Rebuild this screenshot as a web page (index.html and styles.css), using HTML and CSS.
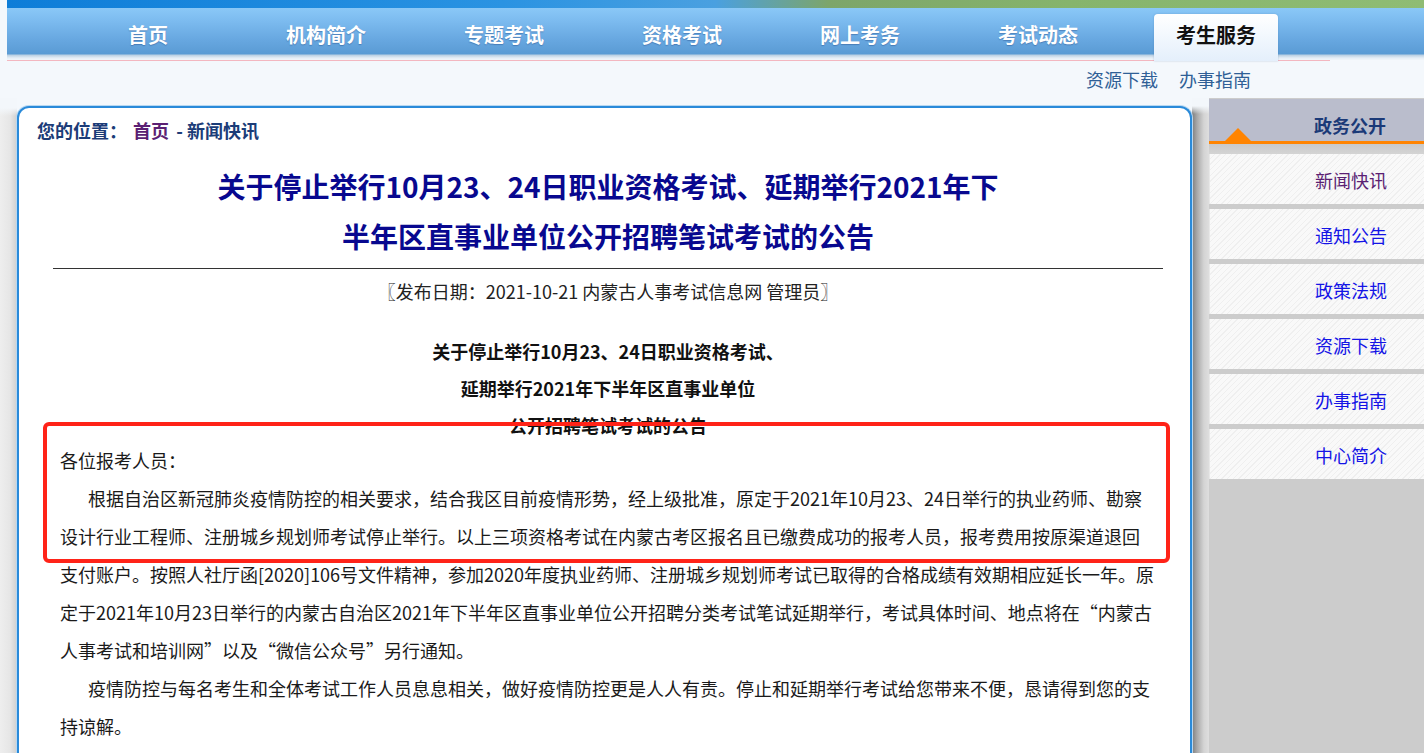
FILE: index.html
```html
<!DOCTYPE html>
<html lang="zh-CN">
<head>
<meta charset="utf-8">
<title>内蒙古人事考试信息网 - 新闻快讯</title>
<link rel="stylesheet" href="styles.css">
</head>
<body>
<div class="page">
  <header class="top">
    <div class="band"></div>
    <nav class="nav">
      <ul class="nav-list">
        <li class="nav-item"><a class="nav-link" href="#">首页</a></li>
        <li class="nav-item"><a class="nav-link" href="#">机构简介</a></li>
        <li class="nav-item"><a class="nav-link" href="#">专题考试</a></li>
        <li class="nav-item"><a class="nav-link" href="#">资格考试</a></li>
        <li class="nav-item"><a class="nav-link" href="#">网上考务</a></li>
        <li class="nav-item"><a class="nav-link" href="#">考试动态</a></li>
        <li class="nav-item"><a class="nav-link nav-active" href="#">考生服务</a></li>
      </ul>
    </nav>
    <div class="pinkline"></div>
    <div class="subbar">
      <a class="sub-link" href="#">资源下载</a>
      <a class="sub-link" href="#">办事指南</a>
    </div>
  </header>

  <div class="main">
    <div class="gutter"></div>
    <section class="box">
      <div class="crumb">
        <span class="crumb-label">您的位置：</span>
        <a class="crumb-home" href="#">首页</a>
        <span class="crumb-cur">- 新闻快讯</span>
      </div>
      <div class="content">
        <h1 class="title">关于停止举行10月23、24日职业资格考试、延期举行2021年下半年区直事业单位公开招聘笔试考试的公告</h1>
        <hr class="rule">
        <p class="meta">〖发布日期：2021-10-21 内蒙古人事考试信息网 管理员〗</p>
        <p class="subtitle">关于停止举行10月23、24日职业资格考试、<br>延期举行2021年下半年区直事业单位<br>公开招聘笔试考试的公告</p>
        <p class="greet">各位报考人员：</p>
        <p class="para">根据自治区新冠肺炎疫情防控的相关要求，结合我区目前疫情形势，经上级批准，原定于2021年10月23、24日举行的执业药师、勘察设计行业工程师、注册城乡规划师考试停止举行。以上三项资格考试在内蒙古考区报名且已缴费成功的报考人员，报考费用按原渠道退回支付账户。按照人社厅函[2020]106号文件精神，参加2020年度执业药师、注册城乡规划师考试已取得的合格成绩有效期相应延长一年。原定于2021年10月23日举行的内蒙古自治区2021年下半年区直事业单位公开招聘分类考试笔试延期举行，考试具体时间、地点将在“内蒙古人事考试和培训网”以及“微信公众号”另行通知。</p>
        <p class="para">疫情防控与每名考生和全体考试工作人员息息相关，做好疫情防控更是人人有责。停止和延期举行考试给您带来不便，恳请得到您的支持谅解。</p>
      </div>
      <div class="mark"></div>
    </section>
    <div class="shade"></div>
    <aside class="side">
      <div class="side-head">
        <span class="side-tri"></span>
        <span class="side-title">政务公开</span>
      </div>
      <div class="side-gap"></div>
      <a class="side-item side-visited" href="#">新闻快讯</a>
      <a class="side-item" href="#">通知公告</a>
      <a class="side-item" href="#">政策法规</a>
      <a class="side-item" href="#">资源下载</a>
      <a class="side-item" href="#">办事指南</a>
      <a class="side-item" href="#">中心简介</a>
    </aside>
  </div>
</div>
</body>
</html>
```
FILE: styles.css
```css
* { box-sizing: border-box; }
html, body { margin: 0; padding: 0; }
body {
  font-family: "Noto Sans CJK SC", "Noto Sans", sans-serif;
  background: #f4f8fc;
  width: 1424px;
  height: 753px;
  overflow: hidden;
}
a { text-decoration: none; }

.top { margin-left: 7px; }
.band {
  height: 8px;
  background: linear-gradient(to right, #0d7dd8 0, #2a93e2 35%, #4aa0e0 50%, #7da56a 58%, #86b46c 75%, #8fbc74 100%);
}
.nav {
  height: 52px;
  background: linear-gradient(to bottom, #8ac8f7 0, #7dbcf0 12px, #67a7e0 32px, #5a9bd4 46px, #b9cfe2 47px, #e6eef6 50px, #f2f6fa 52px);
}
.nav-list {
  list-style: none;
  margin: 0;
  padding: 0 0 0 52px;
  display: flex;
  height: 52px;
}
.nav-item {
  width: 178px;
  display: flex;
  justify-content: center;
}
.nav-link {
  color: #fff;
  font-weight: bold;
  font-size: 20px;
  line-height: 54px;
  height: 54px;
  text-shadow: 0 1px 1px rgba(40, 80, 140, 0.45);
}
.nav-active {
  position: relative;
  z-index: 1;
  width: 124px;
  height: 47px;
  margin-top: 6px;
  line-height: 42px;
  text-align: center;
  color: #111;
  text-shadow: none;
  background: linear-gradient(to bottom, #ffffff 0, #f4f9fe 40%, #e4effb 100%);
  border-radius: 4px 4px 0 0;
  box-shadow: 0 0 2px rgba(60, 100, 150, 0.35);
}
.pinkline {
  width: 1323px;
  height: 1px;
  background: #f3b7c0;
}
.subbar {
  height: 37px;
  display: flex;
  justify-content: flex-end;
  align-items: center;
  gap: 21px;
  padding-right: 173px;
  padding-bottom: 2px;
}
.sub-link {
  color: #2f5f96;
  font-size: 18px;
  line-height: 24px;
}

.main {
  display: flex;
  align-items: stretch;
  height: 655px;
}
.gutter {
  width: 17px;
  flex: none;
  background: linear-gradient(to bottom, #f3f7fb 0, #f3f7fb 10px, transparent 18px),
              linear-gradient(to right, #eeeeee 0, #e6e6e6 60%, #cfcfcf 100%);
}
.box {
  position: relative;
  width: 1175px;
  flex: none;
  margin-top: 8px;
  background: #fff;
  border: 2px solid #2a8ad9;
  border-bottom: none;
  border-radius: 12px 12px 0 0;
  box-shadow: 0 0 0 1px #b7d8f2;
}
.crumb {
  padding: 10px 0 0 18px;
  font-size: 18px;
  font-weight: bold;
  line-height: 24px;
  color: #1b3c78;
}
.crumb-label { margin-right: 2px; }
.crumb-home { color: #5b1f73; }
.crumb-cur { margin-left: 3px; }

.content {
  padding: 0 27px 0 34px;
}
.title {
  width: 790px;
  margin: 19px auto 0;
  font-size: 28px;
  line-height: 50px;
  font-weight: bold;
  color: #08088f;
  text-align: center;
}
.rule {
  margin: 7px 0 0;
  border: none;
  height: 1px;
  background: #333;
}
.meta {
  margin: 10px 0 0;
  font-size: 18px;
  line-height: 24px;
  color: #222;
  text-align: center;
}
.subtitle {
  margin: 30px 0 0;
  font-size: 18px;
  line-height: 37px;
  font-weight: bold;
  color: #111;
  text-align: center;
}
.greet,
.para {
  margin: 0;
  padding: 0 7px;
  font-size: 18px;
  line-height: 38px;
  color: #1a1a1a;
}
.greet { margin-top: -3px; }
.para { text-indent: 28px; }

.mark {
  position: absolute;
  left: 24px;
  top: 314px;
  width: 1127px;
  height: 141px;
  border: 4px solid #ff2318;
  border-radius: 6px;
}

.shade {
  width: 17px;
  flex: none;
  background: linear-gradient(to bottom, #f3f7fb 0, #f3f7fb 8px, transparent 16px),
              linear-gradient(to right, #7d7d7d 0, #a9a9a9 30%, #d4d4d4 70%, #dedede 100%);
}
.side {
  width: 215px;
  flex: none;
  background: #cccccc;
  display: flex;
  flex-direction: column;
  padding-top: 1px;
}
.side-head {
  position: relative;
  height: 45px;
  background: #babdcc;
  border-bottom: 3px solid #ff8400;
  padding: 14px 0 0 105px;
}
.side-title {
  font-size: 18px;
  font-weight: bold;
  line-height: 24px;
  color: #1b3a78;
}
.side-tri {
  position: absolute;
  left: 16px;
  bottom: 0;
  width: 0;
  height: 0;
  border-left: 13px solid transparent;
  border-right: 13px solid transparent;
  border-bottom: 13px solid #ff8400;
}
.side-gap {
  height: 10px;
  background: linear-gradient(to bottom, #c9c9c9 0, #d4d4d4 100%);
}
.side-item {
  display: block;
  height: 50px;
  margin-bottom: 5px;
  padding-left: 105px;
  font-size: 18px;
  line-height: 52px;
  color: #1414e6;
  border-left: 1px solid #e8e8e8;
  background: repeating-linear-gradient(135deg, #f9f9f9 0, #f9f9f9 3px, #efefef 3px, #efefef 4px);
}
.side-visited { color: #5b1f73; }
```
